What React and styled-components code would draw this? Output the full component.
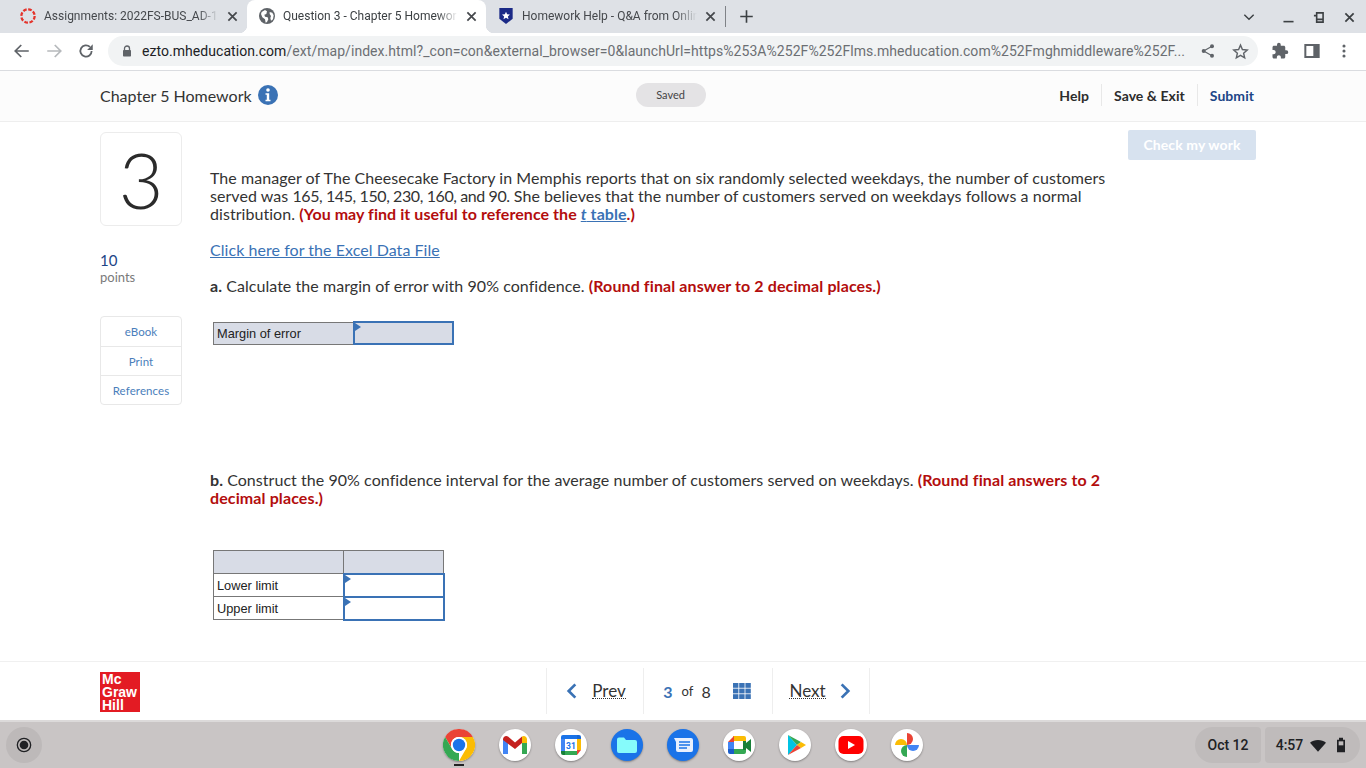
import React from "react";
import styled, { createGlobalStyle } from "styled-components";
import { MdExtension } from "react-icons/md";

const Global = createGlobalStyle`
  html, body { margin: 0; padding: 0; background: #fff; }
  * { box-sizing: border-box; }
`;
const Page = styled.div`
  width: 1366px; height: 768px; overflow: hidden; display: flex; flex-direction: column;
  font-family: Lato, "Open Sans", sans-serif; color: #333;
`;
const TabStrip = styled.div`
  height: 33px; background: #dee1e6; display: flex; align-items: stretch; padding-left: 8px; flex: none;
  font-family: Roboto, sans-serif;
`;
const Tab = styled.div`
  position: relative; width: 239px; display: flex; align-items: center; padding: 0 9px 1px 12px; gap: 8px;
  font-size: 12px; color: ${p => (p.$active ? "#3c4043" : "#45484c")};
  background: ${p => (p.$active ? "#fff" : "transparent")};
  border-radius: 8px 8px 0 0;
  ${p => p.$active && `
    &::before, &::after { content: ""; position: absolute; bottom: 0; width: 8px; height: 8px; }
    &::before { left: -8px; background: radial-gradient(circle at 0 0, transparent 8px, #fff 8.5px); }
    &::after { right: -8px; background: radial-gradient(circle at 100% 0, transparent 8px, #fff 8.5px); }
  `}
`;
const TabTitle = styled.span`
  flex: 1; white-space: nowrap; overflow: hidden; min-width: 0;
  -webkit-mask-image: linear-gradient(90deg, #000 88%, transparent 100%);
  mask-image: linear-gradient(90deg, #000 88%, transparent 100%);
`;
const TabSep = styled.div`width: 1px; height: 21px; background: #7f8287; align-self: center;`;
const NewTab = styled.div`margin-left: 13px; display: flex; align-items: center;`;
const WinControls = styled.div`margin-left: auto; display: flex; align-items: center;`;
const WinBtn = styled.div`width: ${p => p.$w}px; height: 33px; display: flex; align-items: center; justify-content: center; padding-top: ${p => p.$pt || 0}px;`;

const Toolbar = styled.div`
  height: 38px; flex: none; background: #fff; border-bottom: 1px solid #dadce0; display: flex; align-items: center;
  padding: 0 9px 1px 6px; font-family: Roboto, sans-serif;
`;
const ToolBtn = styled.div`width: 32px; height: 30px; display: flex; align-items: center; justify-content: center; flex: none;`;
const Omnibox = styled.div`
  width: 1150px; height: 30px; margin-left: 6px; border-radius: 15px; background: #f1f3f4; display: flex; align-items: center;
  padding: 0 2px 0 13px; flex: none;
`;
const Url = styled.div`
  flex: none; width: 1050px; margin-left: 9px; font-size: 14px; letter-spacing: 0.05px; color: #6c6f73; white-space: nowrap;
  b { font-weight: 400; color: #202124; }
`;
const ToolRight = styled.div`margin-left: 6px; display: flex;`;

const Header = styled.div`
  height: 51px; flex: none; background: #fcfcfc; border-bottom: 1px solid #eee; display: flex; align-items: center; padding: 0 112px 2px 100px;
`;
const HwTitle = styled.div`font-size: 16px; color: #333; display: flex; align-items: center; gap: 6px;`;
const Saved = styled.div`
  margin-left: 358px; width: 70px; height: 24px; border-radius: 12px; background: #e4e3e5; font-size: 11px; color: #444;
  display: flex; align-items: center; justify-content: center; padding-bottom: 2px;
`;
const HeadActions = styled.div`margin-left: auto; display: flex; align-items: center;`;
const HeadLink = styled.div`
  font-size: 14px; font-weight: 700; letter-spacing: .05px; color: ${p => p.$blue ? "#1c4587" : "#2d2d2d"}; padding: 0 12px; height: 22px; display: flex; align-items: center;
  border-left: ${p => p.$sep ? "1px solid #e8e8e8" : "none"}; &:last-child { padding-right: 0; }
`;

const Main = styled.div`flex: 1; display: flex; padding: 8px 110px 0 100px; min-height: 0;`;
const LeftCol = styled.div`width: 82px; flex: none; margin-right: 28px; padding-top: 2px;`;
const QBox = styled.div`
  height: 94px; border: 1px solid #ececec; border-radius: 6px; display: flex; align-items: center; justify-content: center;
  font-size: 77px; font-weight: 300; color: #2b2b2b; line-height: 1;
`;
const PointsNum = styled.div`margin-top: 25px; font-size: 15px; line-height: 18px; color: #1c4587;`;
const PointsLabel = styled.div`font-size: 13px; line-height: 16px; color: #7a7a7a;`;
const SideLinks = styled.div`margin-top: 31px; border: 1px solid #e8e8e8; border-radius: 4px;`;
const SideLink = styled.div`
  height: 29px; display: flex; align-items: center; justify-content: center; font-size: 11.5px; color: #4a7ebb; letter-spacing: .1px;
  & + & { border-top: 1px solid #e8e8e8; }
`;
const Content = styled.div`width: 918px; flex: none; padding-top: 39px;`;
const Para = styled.p`
  margin: ${p => p.$mt || 0}px 0 0; font-size: 16px; line-height: 18px; color: #333; width: 900px; letter-spacing: .05px;
`;
const Nums = styled.span`letter-spacing: -.4px;`;
const Red = styled.strong`color: #b30d0d; font-weight: 700; letter-spacing: ${p => p.$ls || 0.11}px;`;
const Link = styled.a`color: #3a72b5; text-decoration: underline;`;
const QTable = styled.table`
  border-collapse: collapse; table-layout: fixed; margin: ${p => p.$mt}px 0 0 3px; font: 12.8px "Liberation Sans", Arial, sans-serif; color: #222;
`;
const Cell = styled.td`
  border: 1px solid #777; padding: 1px 3px 0; height: ${p => p.$h || 23}px; width: ${p => p.$w}px;
  background: ${p => p.$shade ? "#d8dce6" : "#fff"};
`;
const InputCell = styled(Cell)`
  position: relative; border: 2px solid #3a72b5;
  &::before { content: ""; position: absolute; left: 0; top: 0; border-left: 6px solid #3a72b5; border-top: 4px solid transparent; border-bottom: 4px solid transparent; }
`;
const RightCol = styled.div`width: 128px; flex: none;`;
const CheckBtn = styled.div`
  height: 30px; background: #d7e2ef; border-radius: 2px; color: #fff; font-size: 14px; font-weight: 700; letter-spacing: .1px;
  display: flex; align-items: center; justify-content: center; padding-bottom: 1px;
`;

const Footer = styled.div`
  height: 59px; flex: none; background: #fff; border-top: 1px solid #f0f0f0; display: flex; align-items: center; padding: 2px 0 0 100px;
`;
const Logo = styled.div`
  width: 40px; height: 40px; background: #e31b23; color: #fff; font: 700 14px/13px "Liberation Sans", Arial, sans-serif; padding: 1px 0 0 2px; flex: none;
`;
const Nav = styled.div`margin: -2px 0 0 406px; display: flex; height: 46px; border-left: 1px solid #eee;`;
const NavCell = styled.div`
  width: ${p => p.$w}px; border-right: 1px solid #eee; display: flex; align-items: center; justify-content: center; gap: ${p => p.$gap || 0}px;
  font-size: 16px; color: #333;
`;
const Dotted = styled.span`border-bottom: 1px dotted #333; line-height: 15px; font-size: 17px;`;
const Cur = styled.b`color: #3a72b5; font-size: 16px; margin: 0 9px 0 -2px;`;
const Of = styled.span`font-size: 13px; margin-right: 8px;`;
const Tot = styled.span`margin-right: 22px;`;

const Shelf = styled.div`
  height: 48px; flex: none; background: #c9c5c5; border-top: 2px solid #dcdada; display: flex; align-items: center; padding: 0 6px;
  font-family: Roboto, sans-serif;
`;
const Launcher = styled.div`width: 36px; height: 36px; border-radius: 50%; background: #bdb9b9; display: flex; align-items: center; justify-content: center; flex: none;`;
const Dock = styled.div`margin-left: 401px; display: flex; gap: 24px;`;
const DockIcon = styled.div`
  position: relative; width: 32px; height: 32px; border-radius: 50%; background: ${p => p.$bg || "#fff"}; box-shadow: 0 1px 2px rgba(0,0,0,.35); flex: none;
  svg { display: block; }
  ${p => p.$running && `&::after { content: ""; position: absolute; left: 11px; bottom: -5px; width: 10px; height: 2px; background: #222; }`}
`;
const Status = styled.div`margin-left: auto; display: flex; gap: 4px; color: #202124; font-size: 14px; font-weight: 500;`;
const Pill = styled.div`
  height: 36px; width: ${p => p.$w}px; background: #bfbbbb; display: flex; align-items: center; justify-content: center; gap: 7px;
  border-radius: ${p => p.$left ? "18px 4px 4px 18px" : "4px 18px 18px 4px"};
`;

const Ic = ({ s = 16, children, ...r }) => <svg width={s} height={s} viewBox="0 0 24 24" fill="none" {...r}>{children}</svg>;
const CloseIc = ({ c = "#45484c" }) => <Ic s={11}><path d="M3 3l18 18M21 3L3 21" stroke={c} strokeWidth="3.800" /></Ic>;

const Canvas = () => (
  <Ic><circle cx="12" cy="12" r="10" stroke="#e4332b" strokeWidth="3.400" strokeDasharray="5.500 2.350" /></Ic>
);
const Globe = () => (
  <Ic><circle cx="12" cy="12" r="12" fill="#5f6368" /><path d="M4 6l5-3 3 2-1 4-3 1 1 3 4 1 1 3-2 4-2 1-1-5-4-3-2-5zM16 6l4 1 2 4-1 6-3 2-1-4 1-3-2-3z" fill="#fff" /></Ic>
);
const Shield = () => (
  <Ic><path d="M2 0h20v16l-10 8-10-8z" fill="#1b2a87" /><path d="M12 5.500l1.700 4 4.300.3-3.200 2.800 1 4.200-3.800-2.200-3.800 2.200 1-4.200L6 9.800l4.300-.3z" fill="#fff" /></Ic>
);
const InfoIc = () => (
  <svg width="20" height="20" viewBox="0 0 20 20"><circle cx="10" cy="10" r="10" fill="#3a72b5" /><circle cx="10" cy="5" r="1.800" fill="#fff" /><path d="M7.500 8.200h3.700v6.600h1.300v1.500h-5v-1.500h1.300V9.700H7.500z" fill="#fff" /></svg>
);

const ChromeI = () => (
  <svg width="32" height="32" viewBox="0 0 32 32">
    <path d="M2.140 8A16 16 0 0 1 29.860 8H16A8 8 0 0 0 9.070 20z" fill="#ea4335" />
    <path d="M2.140 8L9.070 20A8 8 0 0 0 16 24L16 32A16 16 0 0 1 2.140 8z" fill="#34a853" />
    <path d="M29.860 8H16A8 8 0 0 1 22.930 20L16 32A16 16 0 0 0 29.860 8z" fill="#fbbc04" />
    <circle cx="16" cy="16" r="8" fill="#fff" /><circle cx="16" cy="16" r="6.200" fill="#1a73e8" />
  </svg>
);
const GmailI = () => (
  <svg width="32" height="32" viewBox="0 0 32 32">
    <path d="M4 10v15h5V14z" fill="#4285f4" /><path d="M23 14v11h5V10z" fill="#34a853" />
    <path d="M4 10.500c0-3 3-4.500 5-3l7 6 7-6v6.500l-7 6-12-9z" fill="#c5221f" /><path d="M23 7.500c2-1.500 5 0 5 3V14l-5 0z" fill="#fbbc04" />
  </svg>
);
const CalI = () => (
  <svg width="32" height="32" viewBox="0 0 32 32">
    <rect x="6" y="6" width="20" height="20" rx="2" fill="#fff" />
    <path d="M10 6h12v4H10z" fill="#1a73e8" /><path d="M6 10V8a2 2 0 0 1 2-2h2v4z" fill="#1a73e8" /><path d="M6 10h4v12H6z" fill="#4285f4" />
    <path d="M22 6h2a2 2 0 0 1 2 2v2h-4z" fill="#1967d2" /><path d="M22 10h4v11h-4z" fill="#fbbc04" />
    <path d="M10 22h12v4H10z" fill="#34a853" /><path d="M6 22h4v4H8a2 2 0 0 1-2-2z" fill="#188038" /><path d="M22 21h4l-4 5z" fill="#ea4335" />
    <text x="16" y="20" textAnchor="middle" fontFamily="Roboto, sans-serif" fontSize="8.500" fontWeight="700" fill="#1a73e8">31</text>
  </svg>
);
const FilesI = () => (
  <svg width="32" height="32" viewBox="0 0 32 32">
    <path d="M6 10.500a2 2 0 0 1 2-2h5l2 2.500h9a2 2 0 0 1 2 2V22a2 2 0 0 1-2 2H8a2 2 0 0 1-2-2z" fill="#86fbfb" />
  </svg>
);
const MsgI = () => (
  <svg width="32" height="32" viewBox="0 0 32 32">
    <path d="M7 9h17a2 2 0 0 1 2 2v10a2 2 0 0 1-2 2H11a2 2 0 0 1-2-2v-8z" fill="#e8f0fe" />
    <path d="M12 13h11M12 16h11M12 19h8" stroke="#1a73e8" strokeWidth="1.300" />
  </svg>
);
const MeetI = () => (
  <svg width="32" height="32" viewBox="0 0 32 32">
    <path d="M10 7h11a2 2 0 0 1 2 2v4h-3v-1H10z" fill="#fbbc04" />
    <path d="M5 13l6-6v6z" fill="#ea4335" /><path d="M5 13h6v7H5z" fill="#4285f4" />
    <path d="M5 20h6v5H7a2 2 0 0 1-2-2z" fill="#1a5dc8" /><path d="M11 20h9v-1h3v4a2 2 0 0 1-2 2H11z" fill="#34a853" />
    <path d="M20 12h3v2l5-4v13l-5-4v2h-3z" fill="#188038" />
    <rect x="11" y="13" width="9" height="7" fill="#fff" />
  </svg>
);
const PlayI = () => (
  <svg width="32" height="32" viewBox="0 0 32 32">
    <path d="M9 6l0 20 9-10z" fill="#00c3e3" /><path d="M9 6l13 7-4 3z" fill="#34a853" />
    <path d="M22 13l5 3-5 3-4-3z" fill="#fbbc04" /><path d="M9 26l13-7-4-3z" fill="#ea4335" />
  </svg>
);
const YtI = () => (
  <svg width="32" height="32" viewBox="0 0 32 32">
    <rect x="3.500" y="7" width="25" height="18" rx="5" fill="#f00" /><path d="M13 12l7 4-7 4z" fill="#fff" />
  </svg>
);
const PhotosI = () => (
  <svg width="32" height="32" viewBox="0 0 32 32">
    <path d="M16 16V4a6 6 0 0 1 0 12z" fill="#ea4335" /><path d="M16 16H4a6 6 0 0 1 12 0z" fill="#fbbc04" />
    <path d="M16 16v12a6 6 0 0 1 0-12z" fill="#34a853" /><path d="M16 16h12a6 6 0 0 1-12 0z" fill="#4285f4" />
  </svg>
);

export default function App() {
  return (
    <Page>
      <Global />
      <TabStrip>
        <Tab><Canvas /><TabTitle>Assignments: 2022FS-BUS_AD-1</TabTitle><CloseIc /></Tab>
        <Tab $active><Globe /><TabTitle>Question 3 - Chapter 5 Homewor</TabTitle><CloseIc /></Tab>
        <Tab><Shield /><TabTitle>Homework Help - Q&amp;A from Onlin</TabTitle><CloseIc /></Tab>
        <TabSep />
        <NewTab><Ic s={15}><path d="M12 2v20M2 12h20" stroke="#3c4043" strokeWidth="2.600" /></Ic></NewTab>
        <WinControls>
          <WinBtn $w={46}><Ic s={14}><path d="M4 8l8 8 8-8" stroke="#3c4043" strokeWidth="2.400" /></Ic></WinBtn>
          <WinBtn $w={32} $pt={2}><Ic s={11}><path d="M1 21h22" stroke="#3c4043" strokeWidth="3.500" /></Ic></WinBtn>
          <WinBtn $w={28} $pt={2}><Ic s={11}><path d="M8 2h14v14H8zM2 8h6v14h14v-6" stroke="#3c4043" strokeWidth="3.500" /></Ic></WinBtn>
          <WinBtn $w={34} $pt={2}><CloseIc c="#3c4043" /></WinBtn>
        </WinControls>
      </TabStrip>
      <Toolbar>
        <ToolBtn><Ic s={18}><path d="M21 12H4M11 4l-8 8 8 8" stroke="#5f6368" strokeWidth="2.300" /></Ic></ToolBtn>
        <ToolBtn><Ic s={18}><path d="M3 12h17M13 4l8 8-8 8" stroke="#b6b9bc" strokeWidth="2.300" /></Ic></ToolBtn>
        <ToolBtn><Ic s={18}><path d="M19.500 12a7.500 7.500 0 1 1-2.300-5.400" stroke="#5f6368" strokeWidth="2.400" /><path d="M21 3v7.500h-7.500z" fill="#5f6368" /></Ic></ToolBtn>
        <Omnibox>
          <Ic s={12}><path d="M7 11V7a5 5 0 0 1 10 0v4" stroke="#5f6368" strokeWidth="2.600" /><rect x="4" y="10" width="16" height="13" rx="1.500" fill="#5f6368" /></Ic>
          <Url><b>ezto.mheducation.com</b>/ext/map/index.html?_con=con&amp;external_browser=0&amp;launchUrl=https%253A%252F%252Flms.mheducation.com%252Fmghmiddleware%252F...</Url>
          <ToolBtn><Ic s={16}><circle cx="18" cy="5" r="3" fill="#5f6368" /><circle cx="18" cy="19" r="3" fill="#5f6368" /><circle cx="5.500" cy="12" r="3" fill="#5f6368" /><path d="M18 5L5.500 12 18 19" stroke="#5f6368" strokeWidth="1.800" /></Ic></ToolBtn>
          <ToolBtn><Ic s={17}><path d="M12 3l2.700 6.200 6.800.6-5.100 4.500 1.500 6.700L12 17.500 6.100 21l1.500-6.700L2.500 9.800l6.800-.6z" stroke="#5f6368" strokeWidth="2" /></Ic></ToolBtn>
        </Omnibox>
        <ToolRight>
          <ToolBtn><MdExtension size={18} color="#5f6368" /></ToolBtn>
          <ToolBtn><Ic s={16}><rect x="2" y="3" width="20" height="18" stroke="#5f6368" strokeWidth="3" /><rect x="14" y="3" width="8" height="18" fill="#5f6368" /></Ic></ToolBtn>
          <ToolBtn><Ic s={16}><circle cx="12" cy="4.500" r="2.300" fill="#5f6368" /><circle cx="12" cy="12" r="2.300" fill="#5f6368" /><circle cx="12" cy="19.500" r="2.300" fill="#5f6368" /></Ic></ToolBtn>
        </ToolRight>
      </Toolbar>
      <Header>
        <HwTitle>Chapter 5 Homework <InfoIc /></HwTitle>
        <Saved>Saved</Saved>
        <HeadActions>
          <HeadLink>Help</HeadLink>
          <HeadLink $sep>Save &amp; Exit</HeadLink>
          <HeadLink $sep $blue>Submit</HeadLink>
        </HeadActions>
      </Header>
      <Main>
        <LeftCol>
          <QBox>3</QBox>
          <PointsNum>10</PointsNum>
          <PointsLabel>points</PointsLabel>
          <SideLinks>
            <SideLink>eBook</SideLink>
            <SideLink>Print</SideLink>
            <SideLink>References</SideLink>
          </SideLinks>
        </LeftCol>
        <Content>
          <Para>
            The manager of The Cheesecake Factory in Memphis reports that on six randomly selected weekdays, the number of customers served was <Nums>165, 145, 150, 230, 160, and 90.</Nums> She believes that the number of customers served on weekdays follows a normal distribution. <Red $ls={0.06}>(You may find it useful to reference the <Link href="#"><em>t</em> table</Link>.)</Red>
          </Para>
          <Para $mt={18}><Link href="#">Click here for the Excel Data File</Link></Para>
          <Para $mt={18}><b>a.</b> Calculate the margin of error with 90% confidence. <Red>(Round final answer to 2 decimal places.)</Red></Para>
          <QTable $mt={26}>
            <tbody>
              <tr><Cell $shade $w={140} $h={22}>Margin of error</Cell><InputCell $shade $w={99} $h={22} /></tr>
            </tbody>
          </QTable>
          <Para $mt={126}><b>b.</b> Construct the 90% confidence interval for the average number of customers served on weekdays. <Red>(Round final answers to 2 decimal places.)</Red></Para>
          <QTable $mt={43}>
            <tbody>
              <tr><Cell $shade $w={130} /><Cell $shade $w={100} /></tr>
              <tr><Cell>Lower limit</Cell><InputCell /></tr>
              <tr><Cell>Upper limit</Cell><InputCell /></tr>
            </tbody>
          </QTable>
        </Content>
        <RightCol><CheckBtn>Check my work</CheckBtn></RightCol>
      </Main>
      <Footer>
        <Logo>Mc<br />Graw<br />Hill</Logo>
        <Nav>
          <NavCell $w={97} $gap={12}><Ic s={16}><path d="M17 2L7 12l10 10" stroke="#3a72b5" strokeWidth="4" /></Ic><Dotted>Prev</Dotted></NavCell>
          <NavCell $w={129}>
            <Cur>3</Cur><Of>of</Of><Tot>8</Tot>
            <svg width="18" height="16" viewBox="0 0 18 16">
              {[0, 1, 2].flatMap(r => [0, 1, 2].map(c => <rect key={r + "-" + c} x={c * 6.2} y={r * 5.6} width="5.400" height="4.800" fill="#3a72b5" />))}
            </svg>
          </NavCell>
          <NavCell $w={97} $gap={11}><Dotted>Next</Dotted><Ic s={16}><path d="M7 2l10 10L7 22" stroke="#3a72b5" strokeWidth="4" /></Ic></NavCell>
        </Nav>
      </Footer>
      <Shelf>
        <Launcher><Ic s={16}><circle cx="12" cy="12" r="10" stroke="#202124" strokeWidth="2" /><circle cx="12" cy="12" r="6.500" fill="#202124" /></Ic></Launcher>
        <Dock>
          <DockIcon $running><ChromeI /></DockIcon>
          <DockIcon><GmailI /></DockIcon>
          <DockIcon><CalI /></DockIcon>
          <DockIcon $bg="#1a73e8"><FilesI /></DockIcon>
          <DockIcon $bg="#1a73e8"><MsgI /></DockIcon>
          <DockIcon><MeetI /></DockIcon>
          <DockIcon><PlayI /></DockIcon>
          <DockIcon><YtI /></DockIcon>
          <DockIcon><PhotosI /></DockIcon>
        </Dock>
        <Status>
          <Pill $left $w={66}>Oct 12</Pill>
          <Pill $w={95}>4:57
            <Ic s={16}><path d="M0 8.500C6 3 18 3 24 8.500L12 22z" fill="#202124" /></Ic>
            <Ic s={16}><path d="M9 1h6v3h3v19H6V4h3z" fill="#202124" /><rect x="8.500" y="6.500" width="7" height="6" fill="#bfbbbb" /></Ic>
          </Pill>
        </Status>
      </Shelf>
    </Page>
  );
}
